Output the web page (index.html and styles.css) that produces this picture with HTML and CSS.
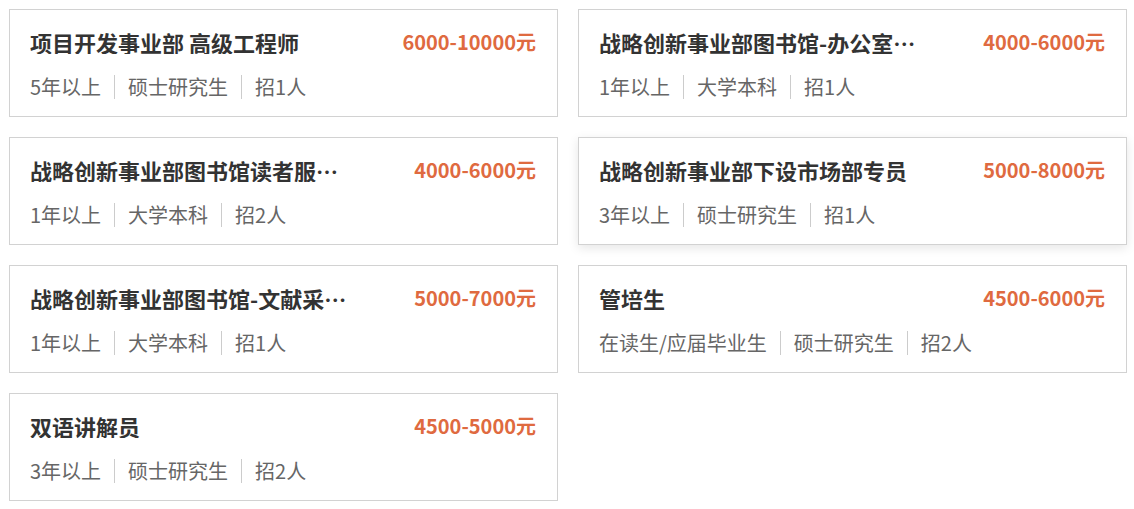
FILE: index.html
```html
<!DOCTYPE html>
<html lang="zh-CN">
<head>
    <meta charset="UTF-8">
    <title>职位列表</title>
    <link rel="stylesheet" href="styles.css">
</head>
<body>
    <div class="job-list">
        <div class="job-item">
            <div class="job-top">
                <h3 class="job-name">项目开发事业部 高级工程师</h3>
                <span class="job-salary">6000-10000元</span>
            </div>
            <div class="job-info">
                <span>5年以上</span><i></i><span>硕士研究生</span><i></i><span>招1人</span>
            </div>
        </div>
        <div class="job-item">
            <div class="job-top">
                <h3 class="job-name">战略创新事业部图书馆-办公室文员</h3>
                <span class="job-salary">4000-6000元</span>
            </div>
            <div class="job-info">
                <span>1年以上</span><i></i><span>大学本科</span><i></i><span>招1人</span>
            </div>
        </div>
        <div class="job-item">
            <div class="job-top">
                <h3 class="job-name">战略创新事业部图书馆读者服务专员</h3>
                <span class="job-salary">4000-6000元</span>
            </div>
            <div class="job-info">
                <span>1年以上</span><i></i><span>大学本科</span><i></i><span>招2人</span>
            </div>
        </div>
        <div class="job-item hover">
            <div class="job-top">
                <h3 class="job-name">战略创新事业部下设市场部专员</h3>
                <span class="job-salary">5000-8000元</span>
            </div>
            <div class="job-info">
                <span>3年以上</span><i></i><span>硕士研究生</span><i></i><span>招1人</span>
            </div>
        </div>
        <div class="job-item">
            <div class="job-top">
                <h3 class="job-name">战略创新事业部图书馆-文献采编员</h3>
                <span class="job-salary">5000-7000元</span>
            </div>
            <div class="job-info">
                <span>1年以上</span><i></i><span>大学本科</span><i></i><span>招1人</span>
            </div>
        </div>
        <div class="job-item">
            <div class="job-top">
                <h3 class="job-name">管培生</h3>
                <span class="job-salary">4500-6000元</span>
            </div>
            <div class="job-info">
                <span>在读生/应届毕业生</span><i></i><span>硕士研究生</span><i></i><span>招2人</span>
            </div>
        </div>
        <div class="job-item">
            <div class="job-top">
                <h3 class="job-name">双语讲解员</h3>
                <span class="job-salary">4500-5000元</span>
            </div>
            <div class="job-info">
                <span>3年以上</span><i></i><span>硕士研究生</span><i></i><span>招2人</span>
            </div>
        </div>
    </div>
</body>
</html>
```

FILE: styles.css
```css
*{
    margin: 0;
    padding: 0;
    box-sizing: border-box;
}
body{
    background: #fff;
    font-family: "Noto Sans CJK SC", "Noto Sans", sans-serif;
}
.job-list{
    display: grid;
    grid-template-columns: 549px 549px;
    column-gap: 20px;
    row-gap: 20px;
    padding: 9px;
}
.job-item{
    height: 108px;
    padding: 20px 21px 0 20px;
    border: 1px solid #d2d2d2;
    background: #fff;
}
.job-item.hover{
    box-shadow: 0 3px 10px rgba(0, 0, 0, 0.1);
}
.job-top{
    display: flex;
    justify-content: space-between;
    align-items: center;
    height: 24px;
}
.job-name{
    max-width: 320px;
    font-size: 22px;
    line-height: 24px;
    font-weight: bold;
    color: #333;
    white-space: nowrap;
    overflow: hidden;
    text-overflow: ellipsis;
}
.job-salary{
    font-size: 20px;
    line-height: 24px;
    font-weight: bold;
    color: #df6a40;
    white-space: nowrap;
}
.job-info{
    display: flex;
    align-items: center;
    margin-top: 21px;
    height: 24px;
    font-size: 20px;
    line-height: 24px;
    color: #666;
}
.job-info i{
    width: 1px;
    height: 24px;
    margin: 0 13px;
    background: #ccc;
}
```
